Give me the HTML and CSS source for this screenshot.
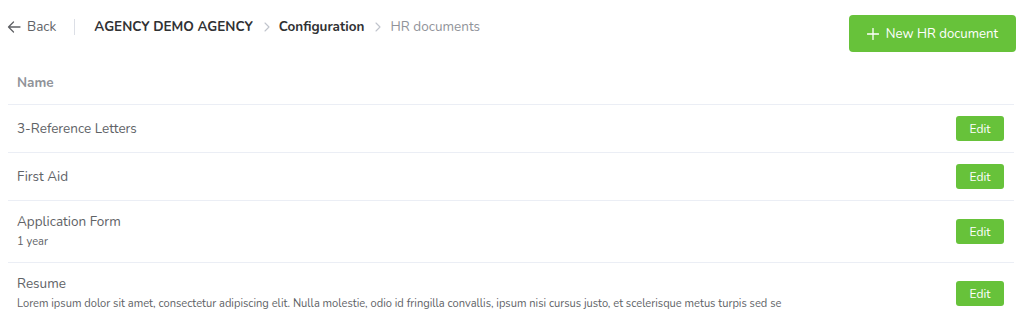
FILE: index.html
```html
<!DOCTYPE html>
<html lang="en">
<head>
<meta charset="utf-8">
<title>HR documents</title>
<link rel="stylesheet" href="styles.css">
</head>
<body>
<div class="page">
  <header class="topbar">
    <nav class="breadcrumb">
      <a class="back" href="#">
        <svg class="back-icon" width="14" height="14" viewBox="0 0 14 14" fill="none" stroke="currentColor" stroke-width="1.3" stroke-linecap="round" stroke-linejoin="round"><path d="M13 7H1.5M6.5 2L1.5 7l5 5"/></svg>
        <span>Back</span>
      </a>
      <span class="divider"></span>
      <span class="crumb strong">AGENCY DEMO AGENCY</span>
      <svg class="chev" width="6" height="10" viewBox="0 0 6 10" fill="none" stroke="currentColor" stroke-width="1.1" stroke-linecap="round" stroke-linejoin="round"><path d="M1 1l4 4-4 4"/></svg>
      <span class="crumb strong">Configuration</span>
      <svg class="chev" width="6" height="10" viewBox="0 0 6 10" fill="none" stroke="currentColor" stroke-width="1.1" stroke-linecap="round" stroke-linejoin="round"><path d="M1 1l4 4-4 4"/></svg>
      <span class="crumb muted">HR documents</span>
    </nav>
    <button class="btn-primary" type="button">
      <svg width="12" height="12" viewBox="0 0 12 12" fill="none" stroke="currentColor" stroke-width="1.3" stroke-linecap="round"><path d="M6 0.5v11M0.5 6h11"/></svg>
      <span>New HR document</span>
    </button>
  </header>

  <div class="table">
    <div class="row head">
      <div class="cell-name">Name</div>
    </div>
    <div class="row">
      <div class="cell-name"><div class="name">3-Reference Letters</div></div>
      <button class="btn-edit" type="button">Edit</button>
    </div>
    <div class="row">
      <div class="cell-name"><div class="name">First Aid</div></div>
      <button class="btn-edit" type="button">Edit</button>
    </div>
    <div class="row">
      <div class="cell-name"><div class="name">Application Form</div><div class="sub">1 year</div></div>
      <button class="btn-edit" type="button">Edit</button>
    </div>
    <div class="row">
      <div class="cell-name"><div class="name">Resume</div><div class="sub">Lorem ipsum dolor sit amet, consectetur adipiscing elit. Nulla molestie, odio id fringilla convallis, ipsum nisi cursus justo, et scelerisque metus turpis sed se</div></div>
      <button class="btn-edit" type="button">Edit</button>
    </div>
  </div>
</div>
</body>
</html>
```

FILE: styles.css
```css
* { box-sizing: border-box; }

html, body {
  margin: 0;
  background: #ffffff;
}

body {
  font-family: "Nunito", "Lato", "Noto Sans", sans-serif;
  font-size: 13.5px;
  color: #606266;
}

.page {
  padding: 0 8px;
}

.topbar {
  display: flex;
  justify-content: space-between;
  align-items: flex-start;
  height: 60px;
  padding-top: 15px;
}

.breadcrumb {
  display: flex;
  align-items: center;
  height: 22px;
  line-height: 22px;
  margin-top: 1px;
  margin-left: -1px;
}

.back {
  display: flex;
  align-items: center;
  gap: 6px;
  color: #606266;
  text-decoration: none;
}

.back-icon {
  color: #606266;
}

.divider {
  width: 1px;
  height: 16px;
  background: #dcdfe6;
  margin: 0 19px 0 18px;
}

.crumb.strong {
  font-weight: 700;
  color: #303133;
}

.crumb.muted {
  color: #909399;
}

.chev {
  color: #c0c4cc;
  margin: 0 9px 0 11px;
}

.btn-primary {
  display: flex;
  align-items: center;
  gap: 7px;
  height: 37px;
  width: 167px;
  justify-content: center;
  border: none;
  border-radius: 4px;
  background: #67c23a;
  color: #ffffff;
  font-family: inherit;
  font-size: 13.2px;
  cursor: pointer;
}

.table {
  display: flex;
  flex-direction: column;
  margin-right: 2px;
}

.row {
  display: flex;
  align-items: center;
  justify-content: space-between;
  border-bottom: 1px solid #ebeef5;
  padding: 11px 10px 11px 9px;
  min-height: 48px;
}

.row.head {
  min-height: 45px;
  font-weight: 700;
  color: #909399;
}

.name {
  line-height: 20px;
}

.sub {
  font-size: 11.1px;
  line-height: 19px;
  color: #606266;
}

.btn-edit {
  width: 48px;
  height: 25px;
  border: none;
  border-radius: 3px;
  background: #67c23a;
  color: #ffffff;
  font-family: inherit;
  font-size: 12px;
  cursor: pointer;
  flex-shrink: 0;
}
```
